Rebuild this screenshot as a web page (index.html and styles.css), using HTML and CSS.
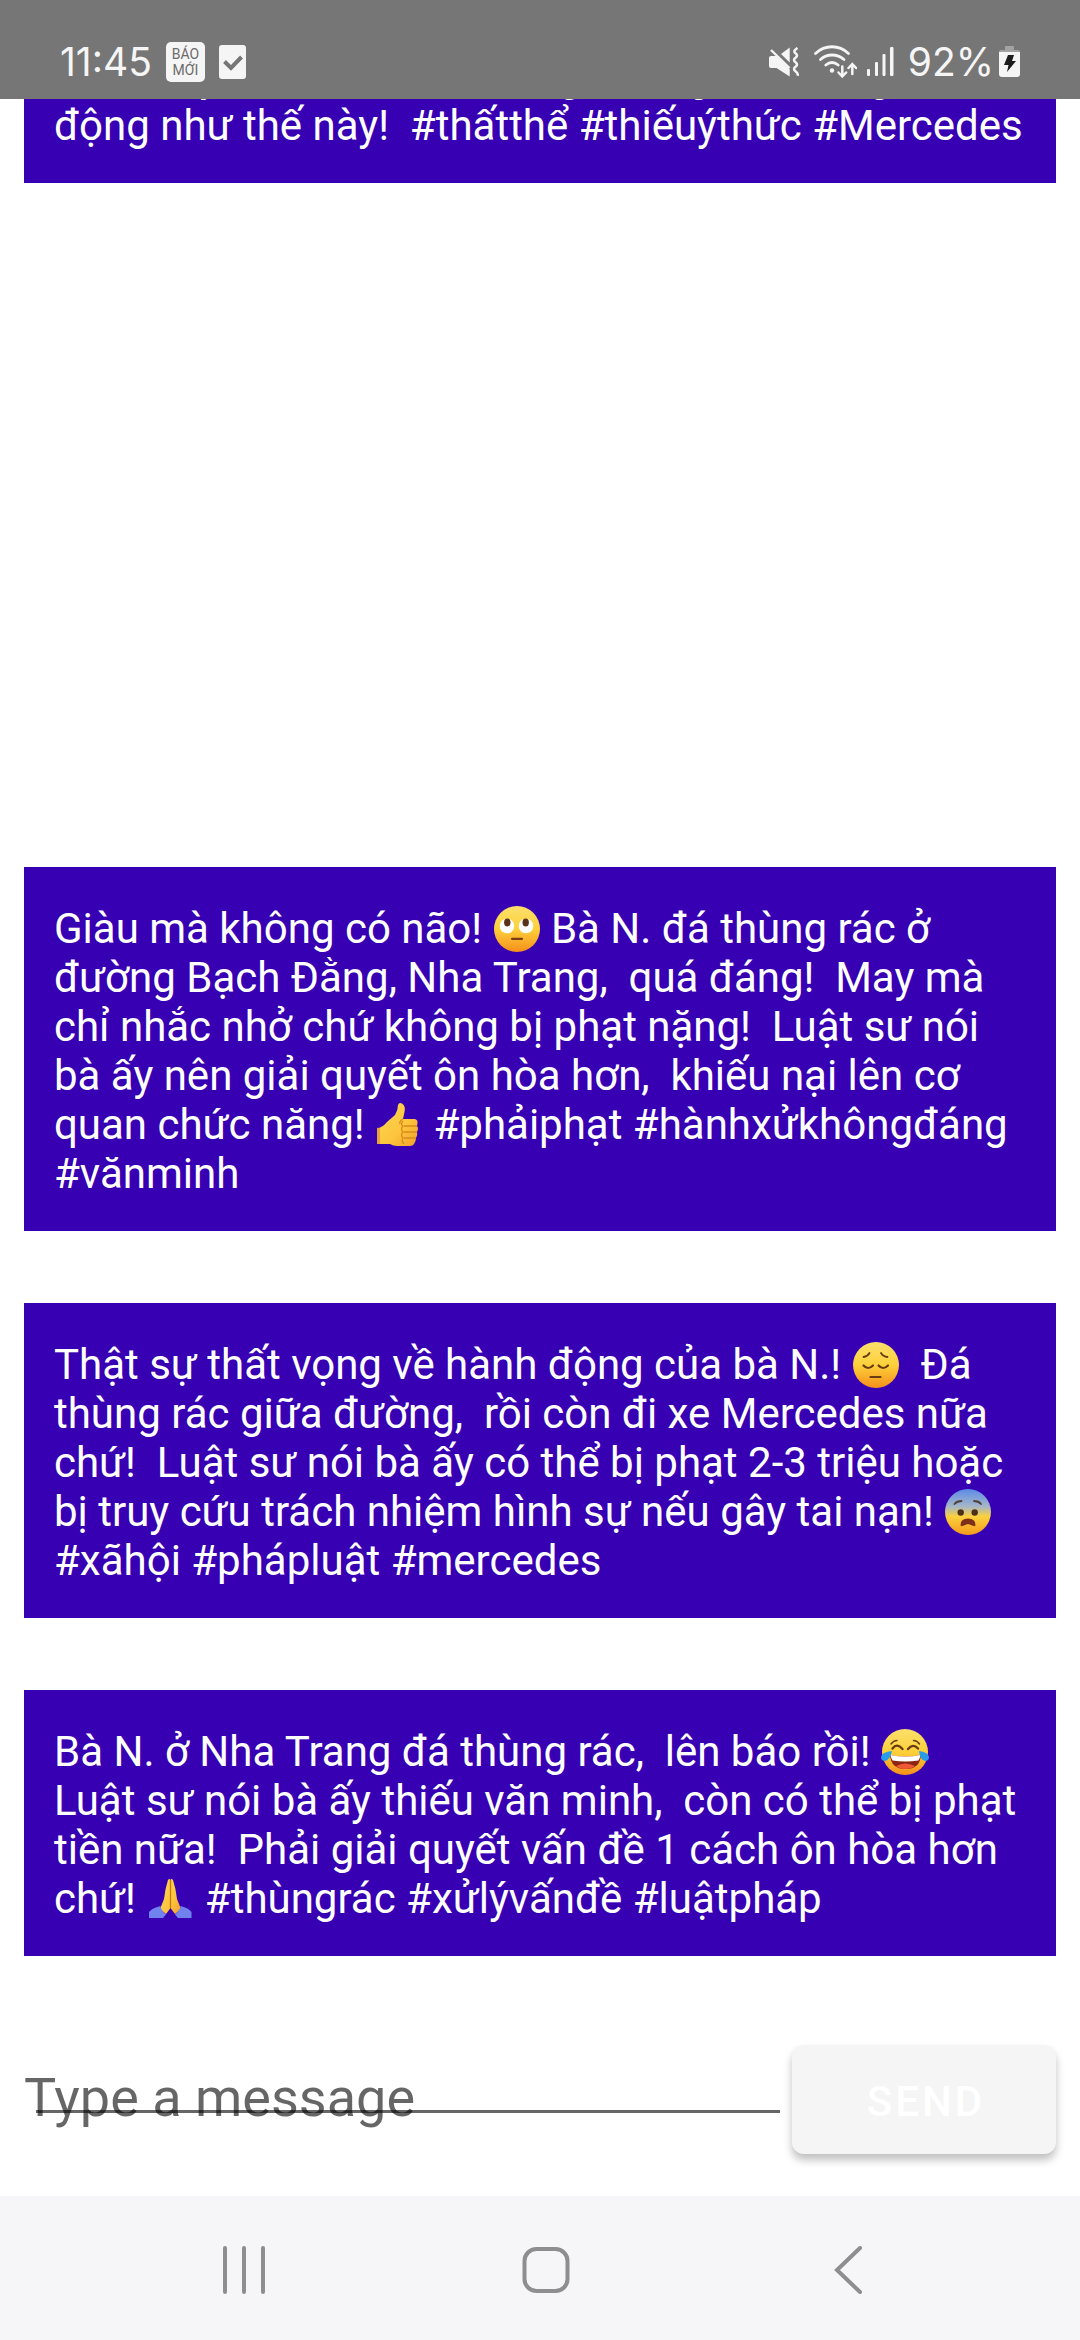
FILE: index.html
```html
<!DOCTYPE html>
<html lang="vi">
<head>
<meta charset="utf-8">
<meta name="viewport" content="width=device-width, initial-scale=1">
<title>Chat</title>
<link rel="stylesheet" href="styles.css">
</head>
<body>
<svg class="defs" width="0" height="0" aria-hidden="true">
  <defs>
    <linearGradient id="face" x1="0" y1="0" x2="0" y2="1">
      <stop offset="0" stop-color="#fbe06c"/><stop offset=".5" stop-color="#fdd03a"/><stop offset="1" stop-color="#f58f1c"/>
    </linearGradient>
    <linearGradient id="fear" x1="0" y1="0" x2="0" y2="1">
      <stop offset="0" stop-color="#5c8be8"/><stop offset=".38" stop-color="#a5b6c8"/><stop offset=".6" stop-color="#fbd13c"/><stop offset="1" stop-color="#f59a1c"/>
    </linearGradient>
    <linearGradient id="hand" x1="0" y1="0" x2="1" y2="1">
      <stop offset="0" stop-color="#ffd75a"/><stop offset=".6" stop-color="#fcc53c"/><stop offset="1" stop-color="#f0a02c"/>
    </linearGradient>
  </defs>
</svg>
<div class="app">
  <header class="status">
    <span class="status-text">11:45</span>
    <span class="badge"><span>BÁO</span><span>MỚI</span></span>
    <svg class="icon-task" width="27" height="34" viewBox="0 0 27 34"><rect width="27" height="34" rx="3" fill="#f5f5f5"/><path d="M5.500 16.500l6.500 6.500 10.500-11" fill="none" stroke="#767676" stroke-width="4"/></svg>
    <span class="status-right">
      <svg width="30" height="30" viewBox="0 0 30 30" fill="#f5f5f5"><path d="M12 7l8.700-6.500V15.500zM2 9h5.500L20.700 22v7.500L7.500 21H2Q0 21 0 19v-8Q0 9 2 9z"/><path d="M2 3l18.500 18" stroke="#f5f5f5" stroke-width="2.400"/><path d="M28.500 1q-5 3-2 5.200t0 4.600q-3 2.200 0 4.400t0 4.600q-3 2.200 0 4.400t2 4.600" fill="none" stroke="#f5f5f5" stroke-width="2.500"/></svg>
      <svg class="icon-wifi" width="44" height="36" viewBox="0 0 44 36" fill="none" stroke="#f5f5f5" stroke-width="2.800" stroke-linecap="round"><path d="M2.500 9.500C12 0.500 26 0.500 35.500 9.500M7.500 15.500c6.500-6 16.500-6 23.500 0M12.800 21q6.200-5 12.400 0"/><circle cx="19" cy="26.500" r="2.200" fill="#f5f5f5" stroke="none"/><path d="M29.300 22.500v10m-3.800-4l3.800 4 3.800-4M39.300 30V20m-3.800 4l3.800-4 3.800 4" stroke-width="2.500"/></svg>
      <svg class="icon-signal" width="27" height="30" viewBox="0 0 27 30" fill="#f5f5f5"><rect y="22" width="3" height="7" rx="1"/><rect x="8" y="15" width="3" height="14" rx="1"/><rect x="15.500" y="7" width="3" height="22" rx="1"/><rect x="23" width="3.500" height="29" rx="1"/></svg>
      <span class="status-text">92%</span>
      <svg class="icon-battery" width="21" height="32" viewBox="0 0 21 32"><path d="M7 0h7q1 0 1 1v3h4q2 0 2 2v2H0V6q0-2 2-2h4V1q0-1 1-1z" fill="#a3a3a3"/><path d="M0 6h21v22q0 3-3 3H3q-3 0-3-3z" fill="#f5f5f5"/><path d="M9 9h6l-2 6h4L8 26l1.500-7H5z" fill="#1c1c1c"/></svg>
    </span>
  </header>

  <main class="messages">
    <p class="message">Nên thấy xấu hổ thì bị không những cả không hành động như thế này!  #thấtthể #thiếuýthức #Mercedes</p>
    <div class="attachment"></div>
    <p class="message">Giàu mà không có não! <svg class="emoji" viewBox="0 0 48 48" role="img" aria-label="🙄"><circle cx="24" cy="25" r="23" fill="url(#face)"/><circle cx="14" cy="22" r="7.300" fill="#fff"/><circle cx="33" cy="22" r="7.300" fill="#fff"/><ellipse cx="14.300" cy="18.500" rx="3.200" ry="4" fill="#593319"/><ellipse cx="32.700" cy="18.500" rx="3.200" ry="4" fill="#593319"/><path d="M19 34.800h10" stroke="#7a3d12" stroke-width="2.200" stroke-linecap="round"/></svg> Bà N. đá thùng rác ở đường Bạch Đằng, Nha Trang,  quá đáng!  May mà chỉ nhắc nhở chứ không bị phạt nặng!  Luật sư nói bà ấy nên giải quyết ôn hòa hơn,  khiếu nại lên cơ quan chức năng! <svg class="emoji" viewBox="0 0 48 48" role="img" aria-label="👍"><path d="M2 28Q7 28 12 22L20 15Q23 10 23 5 24 2 27 3.500 31 6 29.500 12L28 19h12q3 1 2.500 4l-.5 3q2 2 0 6 1 3-1 6 0 3-1.500 5-1 3-5 3H22q-4 0-7-2H2z" fill="url(#hand)"/><path d="M28 19q-4 2-3 5M42 26H29M42 32H29M41 38H29M28 21q-3 3 0 5-3 3 0 6-3 3 0 6-2 3 1 6" fill="none" stroke="#d98c1c" stroke-width="1.300"/><path d="M2 28h3v16H2z" fill="#e9a13a"/></svg> #phảiphạt #hànhxửkhôngđáng #vănminh</p>
    <p class="message">Thật sự thất vọng về hành động của bà N.! <svg class="emoji" viewBox="0 0 48 48" role="img" aria-label="😔"><circle cx="24" cy="25" r="23" fill="url(#face)"/><g fill="none" stroke="#683b12" stroke-width="1.800" stroke-linecap="round"><path d="M11.500 17q4-.5 6-4M29 13q2 3.500 6.500 4"/><path d="M11.500 25.500q4.500 5 9.500 0M26.500 25.500q4.500 5 9.500 0" stroke-width="2.200"/><path d="M18.500 37h10" stroke-width="2.200"/></g></svg>  Đá thùng rác giữa đường,  rồi còn đi xe Mercedes nữa chứ!  Luật sư nói bà ấy có thể bị phạt 2-3 triệu hoặc bị truy cứu trách nhiệm hình sự nếu gây tai nạn! <svg class="emoji" viewBox="0 0 48 48" role="img" aria-label="😨"><circle cx="24" cy="25" r="23" fill="url(#fear)"/><path d="M10.500 17q2.500-3 7-3M30 14q4.500 0 7 3" fill="none" stroke="#504238" stroke-width="1.800" stroke-linecap="round"/><circle cx="16.700" cy="25.500" r="3.200" fill="#4d3018"/><circle cx="30.700" cy="25.500" r="3.200" fill="#4d3018"/><path d="M16.500 38q0-6.500 7.500-6.500t7.500 6.500q0 1.500-2 1l-5.500-2-5.500 2q-2 .5-2-1z" fill="#803018"/></svg> #xãhội #phápluật #mercedes</p>
    <p class="message">Bà N. ở Nha Trang đá thùng rác,  lên báo rồi! <svg class="emoji" viewBox="0 0 48 48" role="img" aria-label="😂"><circle cx="24" cy="25" r="23" fill="url(#face)"/><g fill="none" stroke="#683b12" stroke-linecap="round"><path d="M10 17q2.500-3.500 6-3.500M32.500 13.500q3.500 0 6 3.500" stroke-width="1.500"/><path d="M11.500 21.500q4.500-6 10 .5M27 22q5-6 10-.5" stroke-width="2.400"/></g><path d="M9 28q15 3 31 0-1 14-15.500 14T9 28z" fill="#8c2514"/><path d="M9.500 28q15 3 30 0-.5 3-2 5.500-13 2-26 0Q10 31 9.500 28z" fill="#fff"/><path d="M15 39q9-5 19 0-3.500 3-9.500 3T15 39z" fill="#ee5836"/><path d="M11 24Q1 25 0 30q0 4 4 4 5-1 7-10zM38 24q9 1 10 6 0 4-4 4-5-1-6-10z" fill="#289ce8"/></svg>
Luật sư nói bà ấy thiếu văn minh,  còn có thể bị phạt tiền nữa!  Phải giải quyết vấn đề 1 cách ôn hòa hơn chứ! <svg class="emoji" viewBox="0 0 48 48" role="img" aria-label="🙏"><path d="M22 6q1.500-2 2.500 0 1-2 2.500 0 3 9 4 19l4 10-6 5-4.500-6L20 40l-6-5 4-10q1-10 4-19z" fill="url(#hand)"/><path d="M24.500 6v28" stroke="#c77a12" stroke-width="1.300"/><path d="M14.500 32Q6 34 3 38v6h14l3-3.500q-5-4-5.500-8.500zM34.500 32q8.500 2 11 6v6H32l-3-3.500q5-4 5.500-8.500z" fill="#7181ee"/></svg> #thùngrác #xửlývấnđề #luậtpháp</p>
  </main>

  <form class="composer">
    <input class="field" type="text" placeholder="Type a message" aria-label="Type a message">
    <button class="send" type="button">SEND</button>
  </form>

  <nav class="navbar">
    <button type="button" aria-label="Recents"><svg width="48" height="48" viewBox="0 0 48 48"><path d="M5 2v44M24 2v44M43 2v44"/></svg></button>
    <button type="button" aria-label="Home"><svg width="48" height="48" viewBox="0 0 48 48"><rect x="2.500" y="3" width="43" height="42" rx="12"/></svg></button>
    <button type="button" aria-label="Back"><svg width="48" height="48" viewBox="0 0 48 48"><path d="M36 2L13 24l23 22"/></svg></button>
  </nav>
</div>
</body>
</html>
```

FILE: styles.css
```css
* {
  box-sizing: border-box;
}

body {
  margin: 0;
  background: #fff;
  font-family: Roboto, "Noto Sans", sans-serif;
}

.defs {
  position: absolute;
}

.app {
  display: flex;
  flex-direction: column;
  height: 100vh;
}

/* Status bar */
.status {
  display: flex;
  align-items: center;
  flex: none;
  height: 99px;
  padding: 25px 60px 0;
  background: #767676;
  color: #f5f5f5;
}

.status-text {
  font: 39px/44px Inter, sans-serif;
}

.badge {
  display: flex;
  flex-direction: column;
  align-items: center;
  justify-content: center;
  width: 39px;
  height: 40px;
  margin-left: 14px;
  border-radius: 5px;
  background: #f5f5f5;
  color: #6b6b6b;
  font: 14px/16px Roboto, sans-serif;
}

.icon-task {
  margin-left: 14px;
}

.status-right {
  display: flex;
  align-items: center;
  margin-left: auto;
}

.icon-wifi {
  margin-left: 14px;
}

.icon-signal {
  margin: 0 14px 0 10px;
}

.icon-battery {
  margin-left: 5px;
}

/* Message list, pinned to the newest message */
.messages {
  display: flex;
  flex: 1;
  flex-direction: column;
  justify-content: flex-end;
  gap: 72px;
  min-height: 0;
  padding: 0 24px 72px;
  overflow: hidden;
}

.message {
  flex: none;
  margin: 0;
  padding: 37px 30px 33px;
  background: #3700b3;
  color: #fff;
  font-size: 42px;
  line-height: 49px;
  white-space: pre-wrap;
}

.attachment {
  flex: none;
  height: 540px;
}

.emoji {
  width: 48px;
  height: 48px;
  vertical-align: -9px;
}

/* Composer */
.composer {
  display: flex;
  flex: none;
  padding: 17px 24px 42px;
}

.field {
  flex: 1;
  min-width: 0;
  height: 109px;
  padding: 0 0 4px;
  border: 0;
  outline: 0;
  background: linear-gradient(rgba(0, 0, 0, .6), rgba(0, 0, 0, .6)) 12px 65px / calc(100% - 24px) 3px no-repeat;
  color: #222;
  font: 54px Roboto, sans-serif;
}

.field::placeholder {
  color: rgba(0, 0, 0, .6);
  opacity: 1;
}

.send {
  width: 264px;
  height: 109px;
  padding: 4px 0 0 4px;
  border: 0;
  border-radius: 12px;
  background: #f5f5f5;
  box-shadow: 0 6px 8px rgba(0, 0, 0, .25);
  color: #fff;
  font: 500 42px Roboto, sans-serif;
  letter-spacing: 3px;
}

/* System navigation */
.navbar {
  display: grid;
  grid-template-columns: repeat(3, 28vw);
  justify-content: center;
  flex: none;
  height: 144px;
  padding-left: 12px;
  background: #f6f6f9;
}

.navbar button {
  display: flex;
  align-items: center;
  justify-content: center;
  padding: 4px 0 0;
  border: 0;
  background: none;
}

.navbar svg {
  fill: none;
  stroke: #8e8e90;
  stroke-width: 4;
  stroke-linecap: round;
}
```
